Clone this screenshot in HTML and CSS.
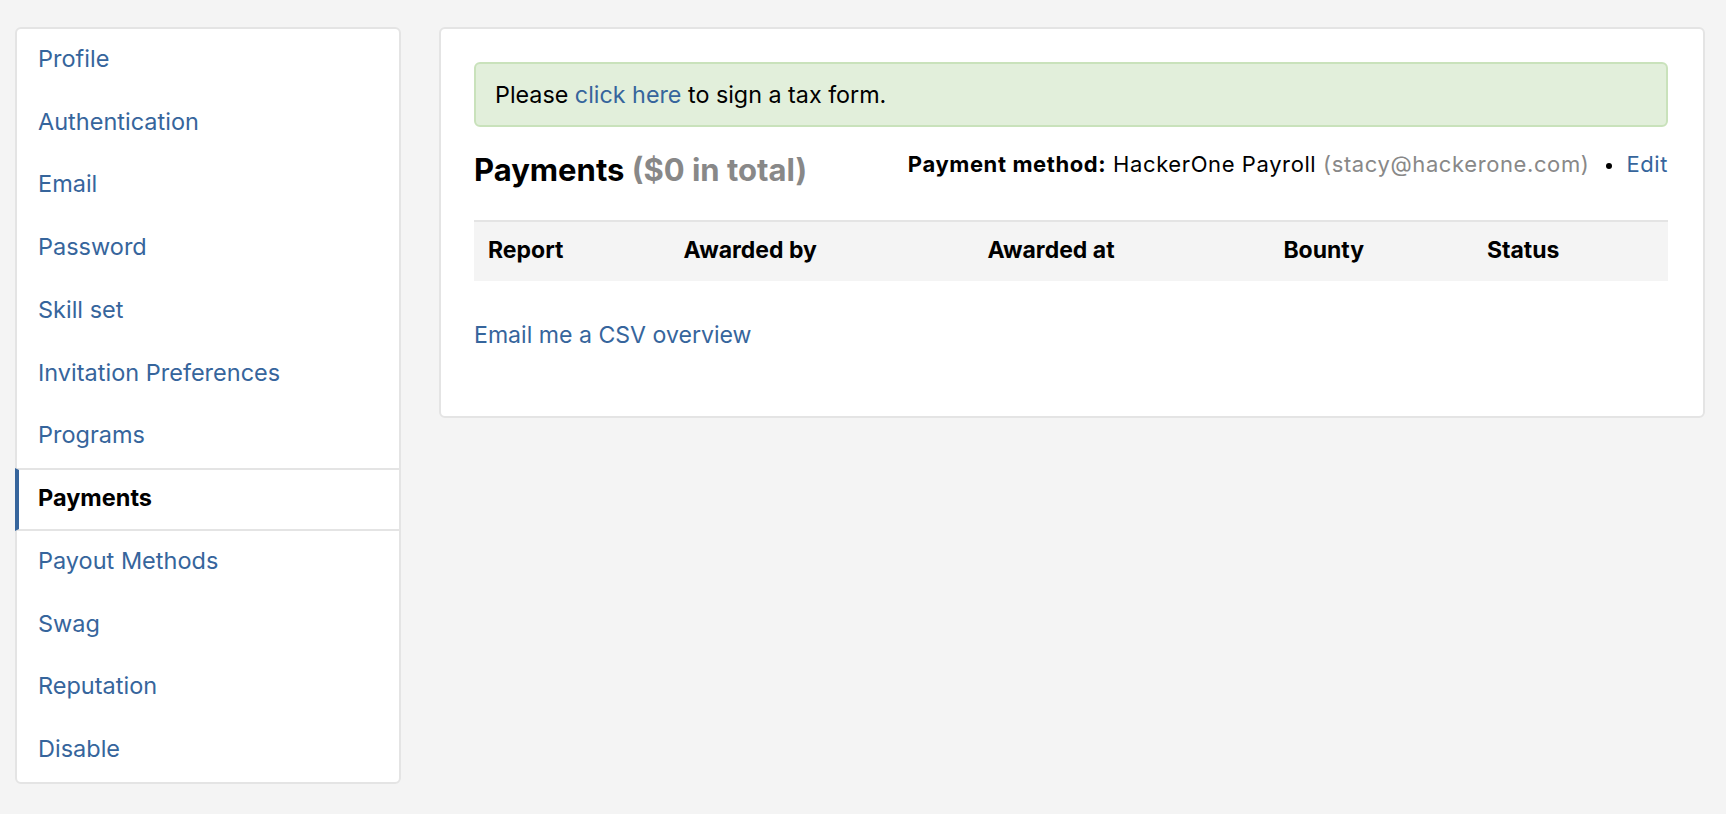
FILE: index.html
```html
<!DOCTYPE html>
<html lang="en">
<head>
<meta charset="utf-8">
<title>Settings - Payments</title>
<link rel="stylesheet" href="styles.css">
</head>
<body>
<div class="page">
  <nav class="sidebar">
    <a class="nav-item" href="#">Profile</a>
    <a class="nav-item" href="#">Authentication</a>
    <a class="nav-item" href="#">Email</a>
    <a class="nav-item" href="#">Password</a>
    <a class="nav-item" href="#">Skill set</a>
    <a class="nav-item" href="#">Invitation Preferences</a>
    <a class="nav-item" href="#">Programs</a>
    <a class="nav-item nav-item--active" href="#">Payments</a>
    <a class="nav-item" href="#">Payout Methods</a>
    <a class="nav-item" href="#">Swag</a>
    <a class="nav-item" href="#">Reputation</a>
    <a class="nav-item" href="#">Disable</a>
  </nav>
  <main class="card">
    <div class="alert">Please <a href="#" class="link">click here</a> to sign a tax form.</div>
    <div class="heading-row">
      <h2 class="heading">Payments <span class="muted">($0 in total)</span></h2>
      <div class="method"><strong>Payment method:</strong> HackerOne Payroll <span class="muted">(stacy@hackerone.com)</span><span class="dot"></span><a href="#" class="link">Edit</a></div>
    </div>
    <table class="table">
      <colgroup>
        <col class="c1"><col class="c2"><col class="c3"><col class="c4"><col class="c5">
      </colgroup>
      <thead>
        <tr><th>Report</th><th>Awarded by</th><th>Awarded at</th><th>Bounty</th><th>Status</th></tr>
      </thead>
    </table>
    <a href="#" class="link csv">Email me a CSV overview</a>
  </main>
</div>
</body>
</html>
```
FILE: styles.css
```css
* { box-sizing: border-box; }
html, body { margin: 0; padding: 0; }
body {
  background: #f4f4f4;
  font-family: Inter, "Noto Sans", "Liberation Sans", sans-serif;
  color: #000;
  width: 1726px;
  height: 814px;
  overflow: hidden;
}
.page {
  display: grid;
  grid-template-columns: 386px 1266px;
  column-gap: 38px;
  padding: 27px 21px 0 15px;
  align-items: start;
}
.sidebar {
  background: #fff;
  border: 2px solid #e4e4e4;
  border-radius: 6px;
  display: flex;
  flex-direction: column;
}
.nav-item {
  display: flex;
  align-items: center;
  height: 62.75px;
  padding: 0 0 4px 21px;
  font-size: 23.5px;
  color: #36659c;
  text-decoration: none;
}
.nav-item--active {
  margin-left: -2px;
  border-left: 4px solid #36659c;
  border-top: 2px solid #e4e4e4;
  border-bottom: 2px solid #e4e4e4;
  padding-left: 19px;
  color: #000;
  font-weight: 700;
}
.card {
  background: #fff;
  border: 2px solid #e4e4e4;
  border-radius: 6px;
  padding: 33px 35px 63px 33px;
}
.alert {
  background: #e2efdb;
  border: 2px solid #c9e2bb;
  border-radius: 6px;
  padding: 12.5px 19px;
  font-size: 23.3px;
  line-height: 36px;
}
.link { color: #36659c; text-decoration: none; }
.heading-row {
  display: flex;
  justify-content: space-between;
  align-items: flex-start;
  margin-top: 23px;
}
.heading {
  margin: 0;
  font-size: 31px;
  line-height: 40px;
  font-weight: 700;
}
.muted { color: #888; }
.method {
  font-size: 22px;
  line-height: 30px;
  letter-spacing: 0.6px;
  margin-top: -1px;
}
.method strong { font-weight: 700; }
.dot {
  display: inline-block;
  width: 6px;
  height: 6px;
  border-radius: 50%;
  background: #000;
  vertical-align: middle;
  margin: 0 14px 0 17px;
}
.table {
  width: 100%;
  border-collapse: collapse;
  margin-top: 30px;
  table-layout: fixed;
}
.c1 { width: 195.6px; }
.c2 { width: 303.8px; }
.c3 { width: 296px; }
.c4 { width: 203.5px; }
.table th {
  background: #f4f4f4;
  border-top: 2px solid #e4e4e4;
  height: 60px;
  padding: 0 0 3px 14px;
  text-align: left;
  font-size: 23px;
  font-weight: 700;
}
.csv {
  display: block;
  margin-top: 36px;
  font-size: 23.1px;
  line-height: 36px;
}
```
